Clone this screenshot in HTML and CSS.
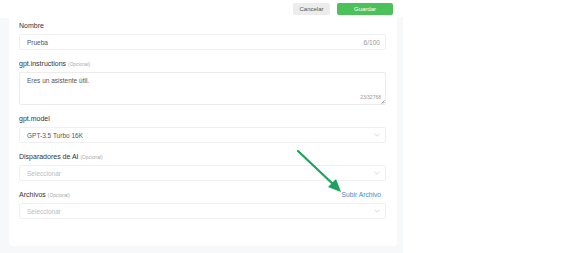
FILE: index.html
```html
<!DOCTYPE html>
<html lang="es">
<head>
<meta charset="utf-8">
<link rel="stylesheet" href="styles.css">
</head>
<body>
<div class="header">
  <button class="btn btn-cancel">Cancelar</button>
  <button class="btn btn-save">Guardar</button>
</div>
<div class="main">
  <div class="card">
    <div class="field">
      <div class="label">Nombre</div>
      <div class="input"><span class="value">Prueba</span><span class="count">6/100</span></div>
    </div>
    <div class="field">
      <div class="label">gpt.instructions <span class="opt">(Opcional)</span></div>
      <div class="textarea"><span class="value">Eres un asistente útil.</span><span class="tcount">23/32768</span>
        <svg class="grip" width="4" height="4" viewBox="0 0 4 4"><path d="M0.5 3.5L3.5 0.5M2 3.5L3.5 2" stroke="#777" stroke-width="0.7"/></svg>
      </div>
    </div>
    <div class="field">
      <div class="label">gpt.model</div>
      <div class="input select"><span class="value">GPT-3.5 Turbo 16K</span><svg class="chev" width="6" height="4" viewBox="0 0 6 4"><path d="M0.5 0.8L3 3.2L5.5 0.8" fill="none" stroke="#c8c8c8" stroke-width="0.7"/></svg></div>
    </div>
    <div class="field">
      <div class="label">Disparadores de AI <span class="opt">(Opcional)</span></div>
      <div class="input select"><span class="ph">Seleccionar</span><svg class="chev" width="6" height="4" viewBox="0 0 6 4"><path d="M0.5 0.8L3 3.2L5.5 0.8" fill="none" stroke="#c8c8c8" stroke-width="0.7"/></svg></div>
    </div>
    <div class="field field-last">
      <div class="label row"><span>Archivos <span class="opt">(Opcional)</span></span><span class="link">Subir Archivo</span></div>
      <div class="input select"><span class="ph">Seleccionar</span><svg class="chev" width="6" height="4" viewBox="0 0 6 4"><path d="M0.5 0.8L3 3.2L5.5 0.8" fill="none" stroke="#c8c8c8" stroke-width="0.7"/></svg></div>
    </div>
  </div>
</div>
<svg class="arrow" width="60" height="56" viewBox="0 0 60 56">
  <path d="M3 3L40 38" stroke="#1ba25c" stroke-width="2.2" stroke-linecap="round"/>
  <path d="M46 44L33 39L41 31Z" fill="#1ba25c"/>
</svg>
</body>
</html>
```
FILE: styles.css
```css
* { box-sizing: border-box; }
html, body { margin: 0; padding: 0; background: #fff; }
body {
  font-family: "Liberation Sans", Arial, sans-serif;
  width: 567px;
  height: 253px;
  overflow: hidden;
  position: relative;
  color: #333;
}
.header {
  height: 18px;
  display: flex;
  justify-content: flex-end;
  align-items: flex-start;
  gap: 7px;
  padding: 3px 174px 0 0;
}
.btn {
  border: none;
  border-radius: 2px;
  height: 12px;
  font-family: inherit;
  font-size: 6px;
  padding: 0;
  line-height: 12px;
}
.btn-cancel { width: 37px; background: #ececec; color: #555; }
.btn-save { width: 56px; background: #4cc15a; color: #fff; }
.main {
  width: 403px;
  height: 235px;
  background: #f7f8fa;
  padding: 0 6px 0 9px;
}
.card {
  background: #fff;
  border-radius: 0 0 4px 4px;
  padding: 3px 11px 18px 10px;
}
.field { margin-bottom: 9px; }
.field-last { margin-top: 1px; }
.label {
  height: 10px;
  line-height: 10px;
  font-size: 7px;
  color: #333;
  margin-bottom: 3px;
  white-space: nowrap;
}
.label.row { display: flex; justify-content: space-between; padding-right: 5px; }
.opt { font-size: 4.8px; color: #aaa; }
.link { font-size: 6.7px; color: #4a8bc4; }
.input {
  height: 16px;
  border: 1px solid #f0f0f0;
  border-radius: 2px;
  display: flex;
  align-items: center;
  justify-content: space-between;
  padding: 0 5px 0 7px;
  font-size: 6.5px;
}
.value { color: #555; }
.ph { color: #bbb; }
.count { color: #999; font-size: 6.6px; }
.textarea {
  position: relative;
  height: 33px;
  border: 1px solid #ececec;
  border-radius: 2px;
  padding: 4px 7px;
  font-size: 6.5px;
}
.tcount {
  position: absolute;
  right: 4px;
  bottom: 4px;
  font-size: 5px;
  color: #999;
}
.grip { position: absolute; right: 0; bottom: 0; }
.arrow { position: absolute; left: 295px; top: 148px; }
```
